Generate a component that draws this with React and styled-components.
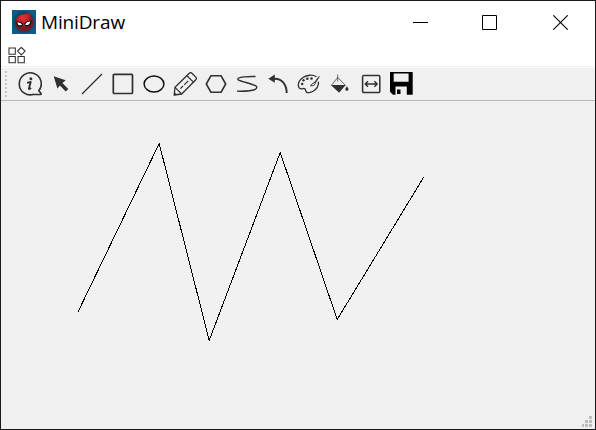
import React from "react";
import styled, { createGlobalStyle } from "styled-components";

const GlobalStyle = createGlobalStyle`
  *, *::before, *::after { box-sizing: border-box; }
  body { margin: 0; overflow: hidden; font-family: "Noto Sans", "Open Sans", sans-serif; }
`;

const Window = styled.div`
  display: flex;
  flex-direction: column;
  width: 596px;
  height: 430px;
  border: 1px solid #1b191b;
  background: #f0f0f0;
`;

const TitleBar = styled.header`
  display: flex;
  align-items: center;
  flex: none;
  height: 43px;
  padding-left: 11px;
  background: #fff;
`;

const Brand = styled.div`
  display: flex;
  align-items: center;
  flex: 1;
  padding-bottom: 2px;
`;

const Title = styled.h1`
  margin: 0 0 0 5px;
  font-family: "Open Sans", "Noto Sans", sans-serif;
  font-size: 19px;
  font-weight: 400;
  line-height: 24px;
  letter-spacing: -0.15px;
  color: #000;
`;

const WindowControls = styled.div`
  display: flex;
  height: 100%;
`;

const ControlButton = styled.button`
  display: flex;
  align-items: center;
  justify-content: center;
  width: ${({ $width }) => $width}px;
  height: 43px;
  padding: 0;
  border: 0;
  background: transparent;
`;

const MenuBar = styled.nav`
  flex: none;
  display: flex;
  align-items: flex-start;
  height: 22px;
  padding: 3px 0 0 7px;
  background: #fff;
`;

const ToolBar = styled.div`
  flex: none;
  display: flex;
  align-items: center;
  gap: 7px;
  height: 35px;
  border-top: 1px solid #f0f0f0;
  border-bottom: 1px solid #b7b7b7;
  box-shadow: inset 0 1px #fff;
  padding: 0 0 0 4px;
`;

const Handle = styled.div`
  display: grid;
  grid-auto-rows: 2px;
  row-gap: 2px;
  width: 6px;
`;

const HandleDot = styled.i`
  width: 2px;
  background: #c6c6c6;
`;

const ToolButton = styled.button`
  width: 24px;
  height: 24px;
  padding: 0;
  border: 0;
  background: transparent;
`;

const Icon = styled.svg`
  display: block;
  width: ${({ $size = 24 }) => $size}px;
  height: ${({ $size = 24 }) => $size}px;
  fill: none;
  stroke: #303030;
  stroke-width: ${({ $weight = 1.5 }) => $weight};
  stroke-linejoin: ${({ $join = "round" }) => $join};
`;

const Canvas = styled.main`
  flex: 1;
  min-height: 0;
  position: relative;
`;

const Drawing = styled.svg`
  display: block;
  width: 594px;
  height: 328px;
`;

const SizeGrip = styled.svg`
  position: absolute;
  right: 3px;
  bottom: 1px;
  width: 10px;
  height: 12px;
  fill: #bdbdbd;
`;

const AppLogo = () => (
  <Icon $size={24} viewBox="0 0 24 24">
    <defs>
      <radialGradient id="sky">
        <stop offset="0" stopColor="#0a3046" />
        <stop offset="0.75" stopColor="#0b4565" />
        <stop offset="1" stopColor="#0d5c86" />
      </radialGradient>
      <radialGradient id="mask" cx="0.42" cy="0.28">
        <stop offset="0" stopColor="#e63338" />
        <stop offset="0.6" stopColor="#c42029" />
        <stop offset="1" stopColor="#7a1a22" />
      </radialGradient>
    </defs>
    <g stroke="none">
      <path d="M0 0h24v24H0z" fill="url(#sky)" />
      <path d="M17 2.300C17 5 21 7 21.300 12c.2 6-4 9.500-9 9.500S3.400 18 3.500 12.500C3.600 7 8 4.500 12 4.300c2 0 3.500-.8 5-2z" fill="url(#mask)" />
      <path d="M4.400 11.500c2.800-.3 5.400.5 7 2.400-1 2.500-3 3.200-5 2.600-1.500-.7-2.200-2.500-2-5zM12.200 13.500c1.500-2 4.300-3.200 7.300-3-.1 3.500-1.500 6-4.300 6-1.500 0-2.700-1-3-3z" fill="#160d12" />
      <path d="M5.500 12.400c2 0 3.600.6 4.700 2.200-2 1.400-4.500.8-4.700-2.200zM13.200 14.500c.9-1.800 2.500-2.800 5-2.900-.2 3-2.600 4.300-5 2.900z" fill="#fff" />
    </g>
  </Icon>
);

const tools = [
  {
    label: "About",
    art: (
      <>
        <path d="M16 22.200A11 11 0 1 1 20.800 18.800L22.900 21.300c.5.700.3 1.200-.5 1.200H14" strokeWidth="1.600" />
        <path d="M9 10.600c1.500.1 2.600-.4 3.700-.7l-1.800 6.500c-.2 1 1 .8 2-.6" strokeWidth="1.900" />
        <circle cx="12.900" cy="6.800" r="1.500" fill="#303030" stroke="none" />
      </>
    ),
  },
  { label: "Select", art: <path d="M4.700 4.300l12 4-3.300 2.700 5.900 5.900-2.600 2.600-5.800-5.900-2.500 2.800z" fill="#303030" stroke="none" /> },
  { label: "Line", art: <path d="M2 22L22 2" strokeWidth="1.200" /> },
  { label: "Rectangle", art: <rect x="2.300" y="2.300" width="19.200" height="19.200" rx="1" strokeWidth="1.700" /> },
  { label: "Ellipse", art: <ellipse cx="12" cy="12" rx="9.900" ry="8" stroke="#111" strokeWidth="1.500" /> },
  {
    label: "Pencil",
    art: (
      <>
        <path d="M1.200 23L2 15.300 16.300 1.300c.9-.9 1.700-.9 2.600 0l3.900 3.800c.9.900.9 1.700 0 2.600L8.700 22z" strokeWidth="1.300" />
        <path d="M2 15.300l6.700 6.700M13.900 3.700l6.500 6.400" strokeWidth="1.200" />
        <path d="M7.400 16.600l2.600-2.600M11.200 12.800l4-4" strokeWidth="1.200" />
        <path d="M.8 23.500l.5-3.500 3 2.800z" fill="#303030" stroke="none" />
      </>
    ),
  },
  { label: "Polygon", art: <path d="M2.300 12L7 3.700h10L21.700 12 17 20.300H7z" strokeWidth="1.600" /> },
  { label: "Freehand", art: <path d="M20.500 4.500C14 4.400 7 4.500 3.700 6c-1.400.8-1 1.800.5 2.300C8 9.800 17 12 20.500 13.700c2 1.100 1.500 3-.5 3.800-4 1.700-11 1.900-18 1.700" strokeWidth="1.350" /> },
  {
    label: "Undo",
    art: (
      <>
        <path d="M2.300 6.800l6.500-4.300v8.300z" fill="#303030" stroke="none" />
        <path d="M8 6.800c7.500-.4 12.600 5 12.700 14.200" strokeWidth="1.900" />
      </>
    ),
  },
  {
    label: "Colour",
    art: (
      <>
        <path d="M19.500 4.700C15.500 2.300 9.800 3 6 5.500c-4.200 3-5.200 7-4.200 9.800.8 2 2.700 1.700 4.200 1.300 1.900-.5 2.600.7 2.800 2.200.4 2 2 2.200 4.500 1.500 3.600-1 7-4 7.900-7.400.4-1.300.3-2.200 0-3.200" strokeWidth="1.300" />
        <path d="M22.200 4.500L17 11c-1.500.2-2.400 1.500-3.500 2.800 2.500.2 4.400-.5 4.600-2.400z" strokeWidth="1" />
        <g fill="#303030" stroke="none">
          <circle cx="5.200" cy="12" r="1.200" />
          <circle cx="6.500" cy="8.300" r="1.200" />
          <circle cx="10.300" cy="6.800" r="1.300" />
          <circle cx="14.500" cy="6.500" r="1.300" />
        </g>
      </>
    ),
  },
  {
    label: "Fill",
    art: (
      <>
        <path d="M9.700 2.500v7M9.700 5.500L3.500 13.200M9.700 5.500l8 8" strokeWidth="0.700" />
        <path d="M2.800 13h14.900l-6.600 7.800z" fill="#303030" stroke="none" />
        <path d="M19 14.200c.8 1.400 1.500 2 1.500 3a1.600 1.600 0 0 1-3.200 0c0-1 .9-1.700 1.700-3z" fill="#303030" stroke="none" />
      </>
    ),
  },
  {
    label: "Fit width",
    art: (
      <>
        <rect x="3.600" y="3.400" width="17.200" height="17.200" rx="1.200" strokeWidth="1.500" />
        <path d="M6.200 12h12M9 9.200L6.200 12 9 14.800M15.400 9.200l2.800 2.800-2.800 2.800" strokeWidth="1.400" />
      </>
    ),
  },
  {
    label: "Save",
    art: <path d="M0 0h22.700v22.700H3L0 19.700zM3.700 1.500v8.200h14.900V1.500zM5.500 14.500v8.200h11.300v-8.200zM7 17.500h3.500v4.500H7z" fill="#000" stroke="none" fillRule="evenodd" />,
  },
];

const strokePoints = [
  [78.2, 311.5],
  [159.2, 143.5],
  [209.2, 340.5],
  [280.2, 152.5],
  [337.2, 319.5],
  [423.5, 177.5],
];

export default function App() {
  return (
    <>
      <GlobalStyle />
      <Window>
        <TitleBar>
          <Brand>
            <AppLogo />
            <Title>MiniDraw</Title>
          </Brand>
          <WindowControls>
            <ControlButton aria-label="Minimize" $width={65}>
              <Icon $size={15} $weight={1} viewBox="0 0 15 15" shapeRendering="crispEdges"><path d="M0 7.500h15" stroke="#000" /></Icon>
            </ControlButton>
            <ControlButton aria-label="Maximize" $width={73}>
              <Icon $size={15} $weight={1} $join="miter" viewBox="0 0 15 15"><path d="M.5.5h14v14H.5z" stroke="#000" /></Icon>
            </ControlButton>
            <ControlButton aria-label="Close" $width={69}>
              <Icon $size={15} $weight={1.1} viewBox="0 0 15 15"><path d="M.3.3l14.400 14.400M14.700.3L.3 14.700" stroke="#000" /></Icon>
            </ControlButton>
          </WindowControls>
        </TitleBar>
        <MenuBar>
          <Icon $size={18} $weight={1.05} $join="miter" viewBox="8 47 18 18">
            <path d="M9 48h6.300v6.300H9zM9 56.500h6.300v6.300H9zM18 56.500h6.300v6.300H18zM21.300 47.300l3.800 3.800-3.800 3.800-3.800-3.800z" />
          </Icon>
        </MenuBar>
        <ToolBar>
          <Handle>
            {Array.from({ length: 7 }, (_, i) => <HandleDot key={i} />)}
          </Handle>
          {tools.map(({ label, art }) => (
            <ToolButton key={label} aria-label={label}>
              <Icon viewBox="0 0 24 24">{art}</Icon>
            </ToolButton>
          ))}
        </ToolBar>
        <Canvas>
          <Drawing viewBox="1 101 594 328">
            <polyline
              points={strokePoints.map((p) => p.join(",")).join(" ")}
              fill="none"
              stroke="#000"
              strokeWidth="1"
              shapeRendering="crispEdges"
            />
          </Drawing>
          <SizeGrip viewBox="0 0 10 12">
            <path d="M7 0h3v3H7zM3 4h3v3H3zM7 4h3v3H7zM0 8h2v3H0zM3 8h3v3H3zM7 8h3v3H7z" />
          </SizeGrip>
        </Canvas>
      </Window>
    </>
  );
}
